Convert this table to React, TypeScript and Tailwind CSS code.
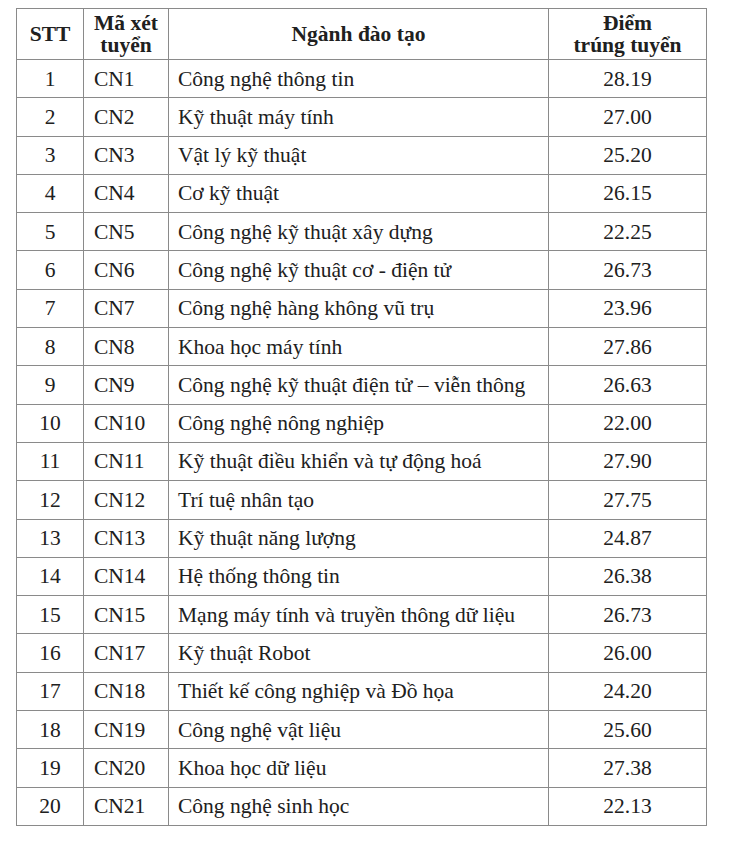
import React from "react";

const rows: [string, string, string][] = [
  ["CN1", "Công nghệ thông tin", "28.19"],
  ["CN2", "Kỹ thuật máy tính", "27.00"],
  ["CN3", "Vật lý kỹ thuật", "25.20"],
  ["CN4", "Cơ kỹ thuật", "26.15"],
  ["CN5", "Công nghệ kỹ thuật xây dựng", "22.25"],
  ["CN6", "Công nghệ kỹ thuật cơ - điện tử", "26.73"],
  ["CN7", "Công nghệ hàng không vũ trụ", "23.96"],
  ["CN8", "Khoa học máy tính", "27.86"],
  ["CN9", "Công nghệ kỹ thuật điện tử – viễn thông", "26.63"],
  ["CN10", "Công nghệ nông nghiệp", "22.00"],
  ["CN11", "Kỹ thuật điều khiển và tự động hoá", "27.90"],
  ["CN12", "Trí tuệ nhân tạo", "27.75"],
  ["CN13", "Kỹ thuật năng lượng", "24.87"],
  ["CN14", "Hệ thống thông tin", "26.38"],
  ["CN15", "Mạng máy tính và truyền thông dữ liệu", "26.73"],
  ["CN17", "Kỹ thuật Robot", "26.00"],
  ["CN18", "Thiết kế công nghiệp và Đồ họa", "24.20"],
  ["CN19", "Công nghệ vật liệu", "25.60"],
  ["CN20", "Khoa học dữ liệu", "27.38"],
  ["CN21", "Công nghệ sinh học", "22.13"],
];

const cell =
  "border border-[#8a8a8a] p-0 font-['Liberation_Serif','Times_New_Roman',serif] text-[#202020]";
const head = `${cell} text-center font-bold text-[21.5px] leading-[22px]`;

export default function App() {
  return (
    <div className="w-[730px] h-[843px] bg-white pt-2 pl-4">
      <table className="border-collapse table-fixed w-[690px]">
        <colgroup>
          <col className="w-[67px]" />
          <col className="w-[85px]" />
          <col className="w-[380px]" />
          <col className="w-[158px]" />
        </colgroup>
        <thead>
          <tr className="h-[51px]">
            <th className={head}>STT</th>
            <th className={head}>
              Mã xét
              <br />
              tuyển
            </th>
            <th className={head}>Ngành đào tạo</th>
            <th className={head}>
              Điểm
              <br />
              trúng tuyển
            </th>
          </tr>
        </thead>
        <tbody>
          {rows.map((r, i) => (
            <tr key={r[0]} className="h-[38.3px]">
              <td className={`${cell} text-center text-[21.5px]`}>{i + 1}</td>
              <td className={`${cell} pl-[10px] text-[21.5px]`}>{r[0]}</td>
              <td className={`${cell} pl-[9px] text-[21.5px]`}>{r[1]}</td>
              <td className={`${cell} text-center text-[21.5px]`}>{r[2]}</td>
            </tr>
          ))}
        </tbody>
      </table>
    </div>
  );
}
